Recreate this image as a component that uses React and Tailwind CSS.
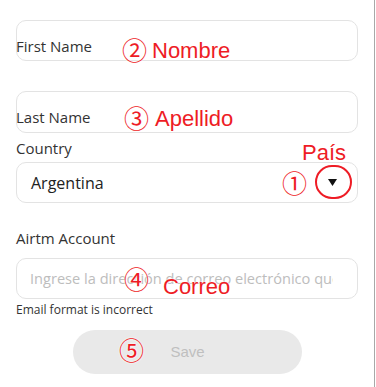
import React from "react";

const note = "absolute text-[#ee1c25] font-['Liberation_Sans',Arial,sans-serif] text-[22px] leading-none [text-shadow:0_0_2px_#fff,0_0_2px_#fff]";
const circled = "absolute text-[#ee1c25] font-['Noto_Sans_CJK_JP',sans-serif] text-[25px] leading-none [text-shadow:0_0_2px_#fff,0_0_2px_#fff]";

function Field({ label, className }) {
  return (
    <div className={`border border-[#e3e3e3] rounded-[10px] ${className}`}>
      <div className="-ml-px pt-[16px] text-[15px] leading-[18px] text-[#333]">
        {label}
      </div>
    </div>
  );
}

export default function App() {
  return (
    <div className="relative w-[376px] h-[387px] bg-white overflow-hidden font-['Open_Sans',sans-serif]">
      <div className="w-[375px] h-full border-r border-[#a8a8a8] px-4 pt-5 flex flex-col">
        <Field label="First Name" className="h-[41px]" />
        <Field label="Last Name" className="mt-[30px] h-[42px]" />

        <div className="mt-[6px] text-[15px] leading-[18px] text-[#333]">Country</div>
        <div className="mt-[5px] h-[41px] border border-[#e3e3e3] rounded-[10px] flex items-center justify-between pl-[14px] pr-[20px]">
          <span className="text-[16px] text-[#222]">Argentina</span>
          <svg width="9" height="7" viewBox="0 0 9 7">
            <path d="M0 0h9L4.5 7z" fill="#111" />
          </svg>
        </div>

        <div className="mt-[26px] text-[15px] leading-[18px] text-[#333]">Airtm Account</div>
        <div className="mt-[11px] h-[41px] border border-[#e3e3e3] rounded-[10px] flex items-center pl-[13px]">
          <div className="w-[303px] text-[14.6px] text-[#bdbdbd] whitespace-nowrap overflow-hidden">
            Ingrese la dirección de correo electrónico que usa en Airtm
          </div>
        </div>
        <div className="mt-[4px] text-[12px] leading-[14px] text-[#333]">Email format is incorrect</div>

        <button className="mt-[13px] ml-[57px] w-[229px] h-[44px] rounded-full bg-[#e9e9e9] text-[15px] text-[#bfbfbf] font-['Liberation_Sans',Arial,sans-serif]">
          Save
        </button>
      </div>

      <span className={`${circled} left-[122px] top-[37px]`}>②</span>
      <span className={`${note} left-[152px] top-[40px]`}>Nombre</span>
      <span className={`${circled} left-[124px] top-[105px]`}>③</span>
      <span className={`${note} left-[155px] top-[108px]`}>Apellido</span>
      <span className={`${note} left-[302px] top-[142px]`}>País</span>
      <span className={`${circled} left-[282px] top-[170px]`}>①</span>
      <div className="absolute left-[315px] top-[165px] w-[37px] h-[34px] rounded-full border-2 border-[#ee1c25]" />
      <span className={`${circled} left-[124px] top-[266px]`}>④</span>
      <span className={`${note} left-[163px] top-[276px]`}>Correo</span>
      <span className={`${circled} left-[119px] top-[337px]`}>⑤</span>
    </div>
  );
}
